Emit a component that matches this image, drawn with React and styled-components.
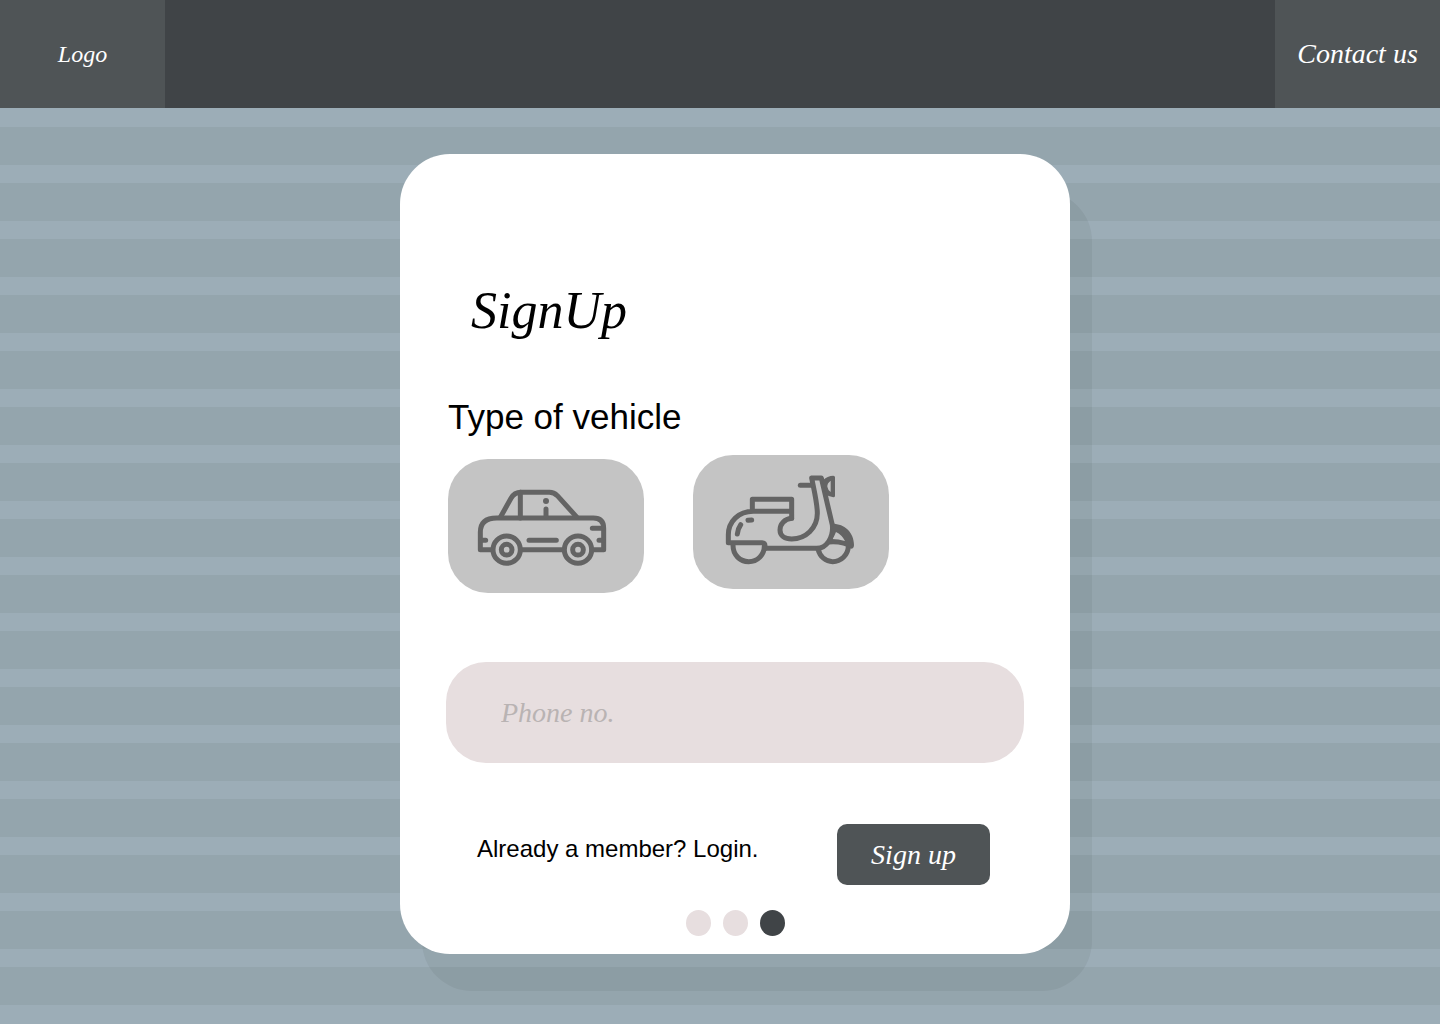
import React from "react";
import styled, { createGlobalStyle } from "styled-components";

const script = `"Liberation Serif", serif`;
const sans = `"Liberation Sans", sans-serif`;

const GlobalStyle = createGlobalStyle`
  *, *::before, *::after { box-sizing: border-box; }
  body { margin: 0; background: #9cadb7; font-family: ${sans}; }
  button, input { font: inherit; border: 0; margin: 0; }
  a { color: inherit; text-decoration: none; }
`;

const Page = styled.div`
  min-height: 100vh;
  display: flex;
  flex-direction: column;
`;

const Header = styled.header`
  display: flex;
  justify-content: space-between;
  height: 108px;
  background: #404447;
`;

const HeaderLink = styled.a`
  display: flex;
  align-items: center;
  justify-content: center;
  width: 165px;
  background: #4f5456;
  color: #fff;
  font: italic ${(p) => p.$size}px ${script};
  white-space: nowrap;
`;

const Main = styled.main`
  flex: 1;
  display: flex;
  justify-content: center;
  align-items: flex-start;
  padding: 45px 0 69px 30px;
  border: solid #9cadb7;
  border-width: 1px 0;
  background: repeating-linear-gradient(#9cadb7 0 18px, #94a5ad 18px 56px) padding-box;
`;

const Card = styled.form`
  width: min(670px, 100%);
  padding: 127px 46px 18px;
  border-radius: 50px;
  background: #fff;
  box-shadow: 22px 37px 0 rgba(0, 10, 0, 0.05);
`;

const Title = styled.h1`
  margin: 0 0 56px 25px;
  font: italic 52px/60px ${script};
  color: #000;
`;

const Vehicles = styled.fieldset`
  margin: 0;
  padding: 0 0 0 2px;
  border: 0;
  min-width: 0;
`;

const Legend = styled.legend`
  padding: 0;
  margin-bottom: 18px;
  font-size: 35px;
  line-height: 40px;
`;

const Choices = styled.div`
  display: flex;
  gap: 49px;
  height: 138px;
`;

const Choice = styled.button`
  align-self: ${(p) => p.$align};
  width: 196px;
  height: 134px;
  padding: 0;
  border-radius: 40px;
  background: #c4c4c4;
  color: #646464;
  cursor: pointer;
`;

const Drawing = styled.svg`
  display: block;
  width: 100%;
  height: 100%;
  fill: none;
  stroke: currentColor;
  stroke-width: 15;
  stroke-linecap: round;
  stroke-linejoin: round;
`;

const PhoneInput = styled.input`
  && {
    display: block;
    width: 100%;
    height: 101px;
    margin-top: 69px;
    padding: 0 55px;
    border-radius: 40px;
    background: #e7dedf;
    color: #404447;
    font: italic 28px ${script};
  }
  &::placeholder { color: #b9b3b3; opacity: 1; }
`;

const Actions = styled.div`
  display: flex;
  justify-content: space-between;
  align-items: flex-start;
  margin-top: 61px;
  padding: 0 34px 0 31px;
`;

const Member = styled.p`
  margin: 0;
  padding-top: 11px;
  font-size: 24px;
  line-height: 28px;
`;

const Submit = styled.button`
  && { font: italic 28px ${script}; }
  width: 153px;
  height: 61px;
  border-radius: 10px;
  background: #4f5456;
  color: #fff;
  cursor: pointer;
`;

const Steps = styled.nav`
  display: flex;
  justify-content: center;
  gap: 12px;
  margin-top: 25px;
`;

const Step = styled.button`
  width: 25px;
  height: 26px;
  padding: 0;
  border-radius: 50%;
  background: ${(p) => (p.$current ? "#404447" : "#e7dedf")};
  cursor: pointer;
`;

const Car = () => (
  <Drawing viewBox="24 27 588 402" aria-hidden="true">
    <path d="M157 299H121V247Q121 204 170 204H460Q491 204 491 235V299H456M243 299H370" />
    <path d="M182 200L213 145Q223 127 243 127H328Q342 127 352 137L409 200M241 127V204" />
    <circle cx="200" cy="299" r="41" />
    <circle cx="200" cy="299" r="16" />
    <circle cx="414" cy="299" r="41" />
    <circle cx="414" cy="299" r="16" />
    <path d="M318 177V200M457 235H488M477 271H488M124 271H137M267 271H349" />
    <circle cx="318" cy="153" r="9" fill="currentColor" stroke="none" />
  </Drawing>
);

const Scooter = () => (
  <Drawing viewBox="24 15 588 402" aria-hidden="true">
    <path d="M202 184V148H320V205M320 184H205C160 184 130 215 130 255V278H230Q240 278 240 288V295" />
    <path d="M320 205C298 207 285 222 285 240C285 258 300 267 320 267C362 267 397 235 397 190C397 160 388 125 380 84H409L442 225C446 262 425 295 395 295H240" />
    <path d="M346 106H380" />
    <path
      fill="currentColor"
      fillRule="evenodd"
      stroke="none"
      d="M412 92Q428 77 445 77Q450 77 450 82V137Q450 142 445 142Q432 141 422 133ZM437 92Q426 100 427 110Q429 121 437 126Z"
    />
    <path d="M144 286C144 315 165 335 191 335C217 335 238 315 238 288" />
    <path d="M399 297C405 320 422 335 443 335C468 335 489 315 490 289" />
    <path
      fill="currentColor"
      fillRule="evenodd"
      stroke="none"
      d="M442 221C480 221 507 248 507 285Q507 296 498 296C480 285 450 279 420 285L432 267Q442 250 442 221ZM453 246Q449 258 441 267Q460 267 480 273Q470 254 453 246Z"
    />
    <path d="M157 252Q159 235 167 224M189 211L200 210" />
  </Drawing>
);

export default function App() {
  return (
    <Page>
      <GlobalStyle />
      <Header>
        <HeaderLink href="#home" $size={24}>Logo</HeaderLink>
        <HeaderLink href="#contact" $size={28}>Contact us</HeaderLink>
      </Header>
      <Main>
        <Card onSubmit={(e) => e.preventDefault()}>
          <Title>SignUp</Title>
          <Vehicles>
            <Legend>Type of vehicle</Legend>
            <Choices>
              <Choice type="button" aria-label="Car" $align="flex-end">
                <Car />
              </Choice>
              <Choice type="button" aria-label="Scooter" $align="flex-start">
                <Scooter />
              </Choice>
            </Choices>
          </Vehicles>
          <PhoneInput type="tel" aria-label="Phone no." placeholder="Phone no." />
          <Actions>
            <Member>
              Already a member? <a href="#login">Login.</a>
            </Member>
            <Submit type="submit">Sign up</Submit>
          </Actions>
          <Steps aria-label="Steps">
            <Step type="button" aria-label="Step 1" />
            <Step type="button" aria-label="Step 2" />
            <Step type="button" aria-label="Step 3" aria-current="step" $current />
          </Steps>
        </Card>
      </Main>
    </Page>
  );
}
